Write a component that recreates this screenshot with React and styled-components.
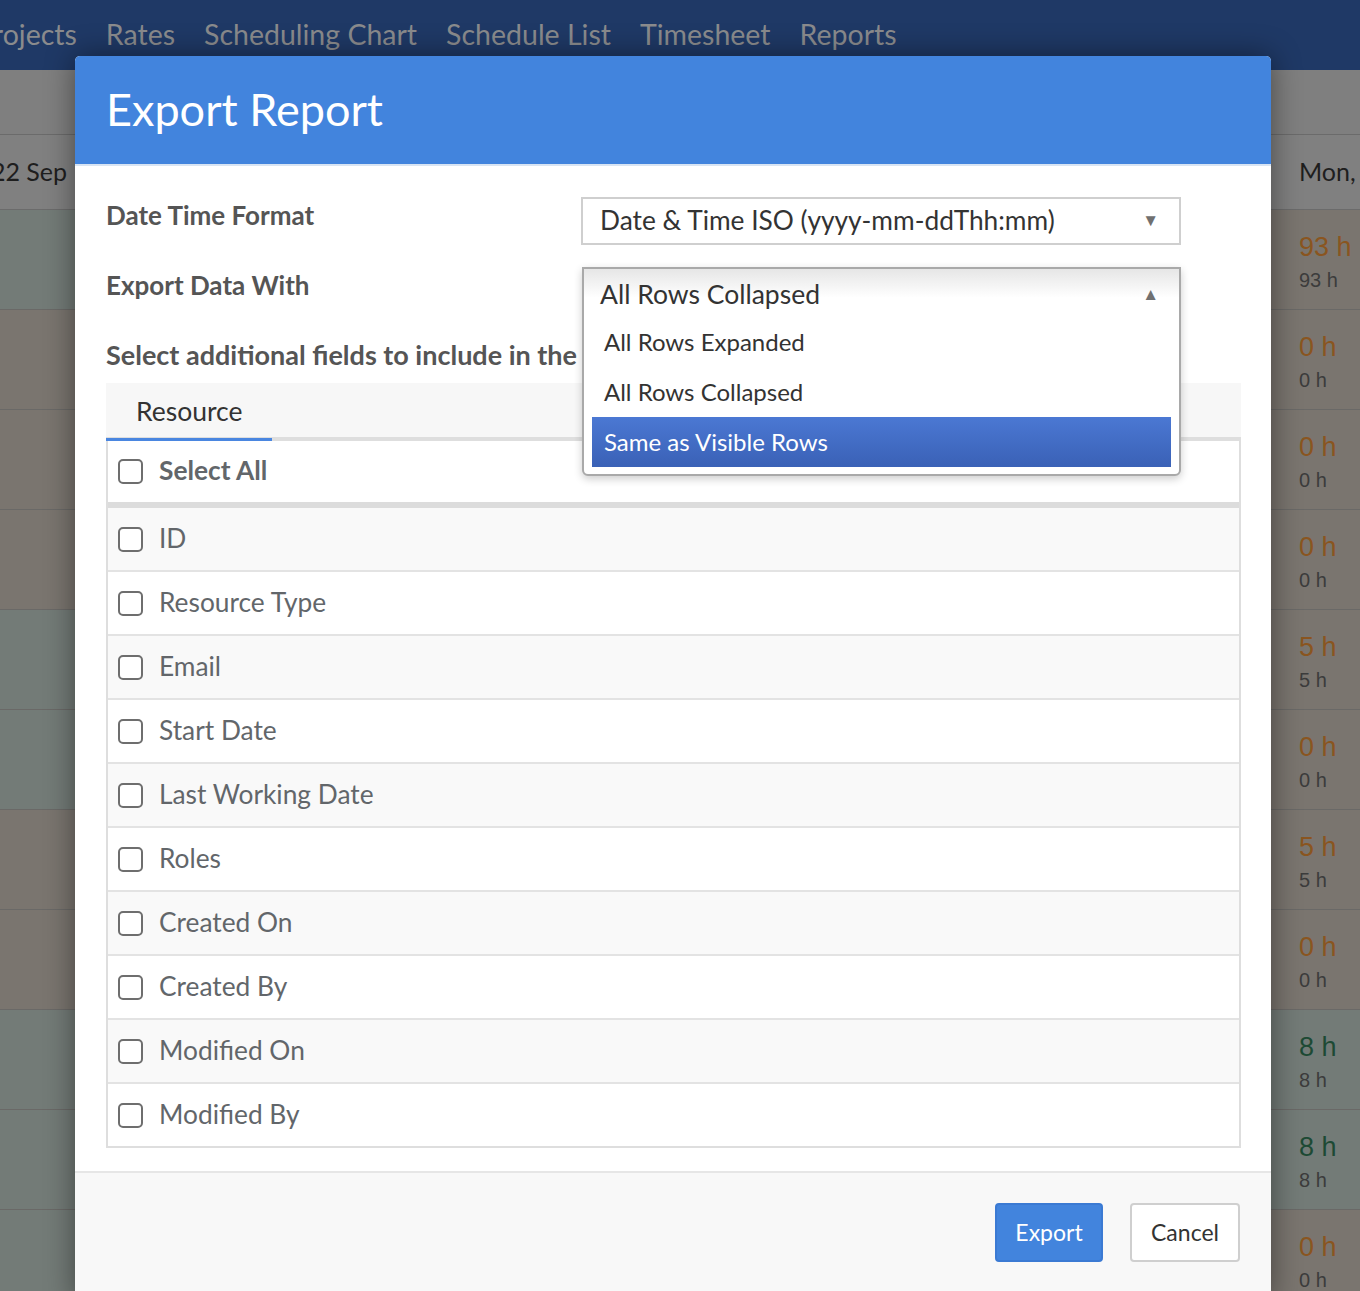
import React from 'react';
import styled, { createGlobalStyle } from 'styled-components';

const navItems = ['Projects', 'Rates', 'Scheduling Chart', 'Schedule List', 'Timesheet', 'Reports'];

const leftTones = ['teal', 'brown', 'brown', 'brown', 'teal', 'teal', 'brown', 'brown', 'teal', 'teal', 'teal'];

const hours = [
    { value: 93, tone: 'brown', kind: 'over' },
    { value: 0, tone: 'brown', kind: 'over' },
    { value: 0, tone: 'brown', kind: 'over' },
    { value: 0, tone: 'brown', kind: 'over' },
    { value: 5, tone: 'brown', kind: 'over' },
    { value: 0, tone: 'brown', kind: 'over' },
    { value: 5, tone: 'brown', kind: 'over' },
    { value: 0, tone: 'brown', kind: 'over' },
    { value: 8, tone: 'teal', kind: 'ok' },
    { value: 8, tone: 'teal', kind: 'ok' },
    { value: 0, tone: 'brown', kind: 'over' }
];

const fields = ['ID', 'Resource Type', 'Email', 'Start Date', 'Last Working Date', 'Roles', 'Created On', 'Created By', 'Modified On', 'Modified By'];

const exportOptions = ['All Rows Expanded', 'All Rows Collapsed', 'Same as Visible Rows'];

export default function App() {
    return (
        <Page>
            <GlobalStyle />

            <Nav>
                {navItems.map((item) => <NavItem key={item}>{item}</NavItem>)}
            </Nav>

            <Toolbar />

            <Board>
                <DayColumn>
                    <HeaderCell align='end'>22 Sep</HeaderCell>
                    {leftTones.map((tone, i) => <Cell key={i} tone={tone} />)}
                </DayColumn>

                <Middle />

                <HoursColumn>
                    <HeaderCell>Mon,</HeaderCell>
                    {hours.map((h, i) => (
                        <Cell key={i} tone={h.tone}>
                            <HoursMain kind={h.kind}>{h.value} h</HoursMain>
                            <HoursSub>{h.value} h</HoursSub>
                        </Cell>
                    ))}
                </HoursColumn>
            </Board>

            <Modal>
                <ModalHeader>
                    <Title>Export Report</Title>
                </ModalHeader>

                <ModalBody>
                    <FormGrid>
                        <Label>Date Time Format</Label>
                        <SelectWrap>
                            <Select>
                                <span>Date &amp; Time ISO (yyyy-mm-ddThh:mm)</span>
                                <Arrow>▼</Arrow>
                            </Select>
                        </SelectWrap>

                        <Label>Export Data With</Label>
                        <SelectWrap>
                            <Popup>
                                <PopupHead>
                                    <span>All Rows Collapsed</span>
                                    <Arrow>▲</Arrow>
                                </PopupHead>
                                {exportOptions.map((opt) => (
                                    <Option key={opt} active={opt === 'Same as Visible Rows'}>{opt}</Option>
                                ))}
                            </Popup>
                        </SelectWrap>
                    </FormGrid>

                    <SectionTitle>Select additional fields to include in the export</SectionTitle>

                    <Tabs>
                        <Tab active>Resource</Tab>
                    </Tabs>

                    <FieldList>
                        <FieldRow head>
                            <Checkbox />
                            <FieldText bold>Select All</FieldText>
                        </FieldRow>
                        {fields.map((f, i) => (
                            <FieldRow key={f} shaded={i % 2 === 0}>
                                <Checkbox />
                                <FieldText>{f}</FieldText>
                            </FieldRow>
                        ))}
                    </FieldList>
                </ModalBody>

                <ModalFooter>
                    <Button primary>Export</Button>
                    <Button>Cancel</Button>
                </ModalFooter>
            </Modal>
        </Page>
    );
}

const GlobalStyle = createGlobalStyle`
    html, body {
        margin: 0;
        padding: 0;
        height: 100%;
        overflow: hidden;
    }

    body {
        font-family: Lato, "Liberation Sans", sans-serif;
        background: #79746f;
    }

    #root {
        height: 100%;
    }

    * {
        box-sizing: border-box;
    }
`;

const Page = styled.div`
    position: relative;
    height: 1291px;
    overflow: hidden;
    display: flex;
    flex-direction: column;
`;

const Nav = styled.nav`
    height: 70px;
    flex-shrink: 0;
    background: #1f3966;
    display: flex;
    align-items: center;
    gap: 29px;
    margin-left: -24px;
    padding-bottom: 2px;
`;

const NavItem = styled.span`
    color: #8a8b8d;
    font-size: 28.5px;
    white-space: nowrap;
`;

const Toolbar = styled.div`
    height: 65px;
    flex-shrink: 0;
    background: #7f7f7f;
    border-bottom: 1px solid #6b6b6b;
`;

const Board = styled.div`
    flex: 1;
    display: flex;
`;

const DayColumn = styled.div`
    width: 76px;
    display: flex;
    flex-direction: column;
`;

const Middle = styled.div`
    flex: 1;
    background: #7a7570;
`;

const HoursColumn = styled.div`
    width: 90px;
    display: flex;
    flex-direction: column;
`;

const HeaderCell = styled.div`
    height: 75px;
    flex-shrink: 0;
    background: #808080;
    border-bottom: 1px solid #6b6b6b;
    display: flex;
    align-items: center;
    justify-content: ${(p) => (p.align === 'end' ? 'flex-end' : 'flex-start')};
    padding: 0 ${(p) => (p.align === 'end' ? '9px' : '0')} 2px ${(p) => (p.align === 'end' ? '0' : '29px')};
    font-size: 25px;
    color: #1e1e1e;
    white-space: nowrap;
`;

const Cell = styled.div`
    height: 100px;
    flex-shrink: 0;
    background: ${(p) => (p.tone === 'teal' ? '#737b77' : '#7a756f')};
    border-bottom: 1px solid #6a6967;
    padding: 21px 0 0 29px;
    font-family: "Liberation Sans", Arial, sans-serif;
`;

const HoursMain = styled.div`
    font-size: 27px;
    line-height: 32px;
    color: ${(p) => (p.kind === 'ok' ? '#1d4a34' : '#8a5520')};
`;

const HoursSub = styled.div`
    font-size: 20px;
    line-height: 34px;
    color: #3c3c3c;
`;

const Modal = styled.div`
    position: absolute;
    top: 56px;
    left: 75px;
    width: 1196px;
    background: #fff;
    border-radius: 5px 5px 0 0;
    box-shadow: 0 0 30px rgba(0, 0, 0, 0.45);
    display: flex;
    flex-direction: column;
`;

const ModalHeader = styled.header`
    height: 110px;
    background: #4284dd;
    border-radius: 5px 5px 0 0;
    border-bottom: 2px solid #d8e4f3;
    display: flex;
    align-items: center;
    padding: 0 0 2px 31px;
`;

const Title = styled.h1`
    margin: 0;
    color: #fff;
    font-size: 45px;
    font-weight: 400;
`;

const ModalBody = styled.div`
    padding: 31px 30px 23px 31px;
`;

const FormGrid = styled.div`
    display: grid;
    grid-template-columns: 475px 600px;
    row-gap: 22px;
`;

const Label = styled.label`
    font-size: 26px;
    font-weight: 700;
    color: #555;
    padding-top: 2px;
`;

const SelectWrap = styled.div`
    position: relative;
    height: 48px;
`;

const Select = styled.div`
    height: 48px;
    border: 2px solid #cfcfcf;
    display: flex;
    align-items: center;
    justify-content: space-between;
    padding: 0 20px 2px 17px;
    font-size: 26.3px;
    color: #333;
    background: #fff;
`;

const Arrow = styled.span`
    font-size: 17px;
    color: #707070;
`;

const Popup = styled.div`
    position: absolute;
    top: 0;
    left: 1px;
    right: 0;
    z-index: 2;
    background: #fff;
    border: 2px solid #a9a9a9;
    border-radius: 0 0 6px 6px;
    box-shadow: 0 3px 8px rgba(0, 0, 0, 0.2);
    padding: 0 8px 7px 8px;
`;

const PopupHead = styled.div`
    height: 48px;
    margin: 0 -8px;
    display: flex;
    align-items: center;
    justify-content: space-between;
    padding: 2px 20px 0 16px;
    font-size: 26.5px;
    color: #333;
    background: linear-gradient(#e6e6e6, #ffffff 60%);
`;

const Option = styled.div`
    height: 50px;
    display: flex;
    align-items: center;
    padding: 0 12px 2px 12px;
    font-size: 24px;
    color: ${(p) => (p.active ? '#fff' : '#333')};
    background: ${(p) => (p.active ? 'linear-gradient(#4b78d3, #3a61b6)' : 'transparent')};
`;

const SectionTitle = styled.h2`
    margin: 24px 0 12px 0;
    font-size: 27px;
    line-height: 32px;
    font-weight: 700;
    color: #555;
    white-space: nowrap;
`;

const Tabs = styled.div`
    display: flex;
    background: #f7f7f7;
    border-bottom: 4px solid #dedede;
`;

const Tab = styled.div`
    width: 166px;
    height: 58px;
    margin-bottom: -4px;
    display: flex;
    align-items: center;
    padding: 0 0 0 30px;
    font-size: 26.5px;
    color: #333;
    border-bottom: 3px solid ${(p) => (p.active ? '#4a86e0' : 'transparent')};
`;

const FieldList = styled.div`
    border: 2px solid #dedede;
    border-top: none;
`;

const FieldRow = styled.div`
    height: ${(p) => (p.head ? '67px' : '64px')};
    display: flex;
    align-items: center;
    gap: 16px;
    padding: 0 10px;
    background: ${(p) => (p.shaded ? '#f9f9f9' : '#fff')};
    border-bottom: ${(p) => (p.head ? '6px solid #dcdcdc' : '2px solid #e3e3e3')};

    &:last-child {
        height: 62px;
        border-bottom: none;
    }
`;

const Checkbox = styled.span`
    width: 25px;
    height: 25px;
    flex-shrink: 0;
    border: 2px solid #6e6e6e;
    border-radius: 5px;
    background: #fff;
`;

const FieldText = styled.span`
    font-size: 26.3px;
    font-weight: ${(p) => (p.bold ? 700 : 400)};
    color: #62666a;
    padding-bottom: 3px;
`;

const ModalFooter = styled.footer`
    background: #f8f8f8;
    border-top: 2px solid #e6e6e6;
    display: flex;
    justify-content: flex-end;
    gap: 27px;
    padding: 30px 31px 40px 0;
`;

const Button = styled.button`
    height: 59px;
    width: ${(p) => (p.primary ? '108px' : '110px')};
    padding: 0 0 2px;
    font-family: Lato, "Liberation Sans", sans-serif;
    font-size: 23px;
    border-radius: 4px;
    color: ${(p) => (p.primary ? '#fff' : '#333')};
    background: ${(p) => (p.primary ? '#4284dd' : '#fff')};
    border: 2px solid ${(p) => (p.primary ? '#3b7ad3' : '#cfcfcf')};
`;
